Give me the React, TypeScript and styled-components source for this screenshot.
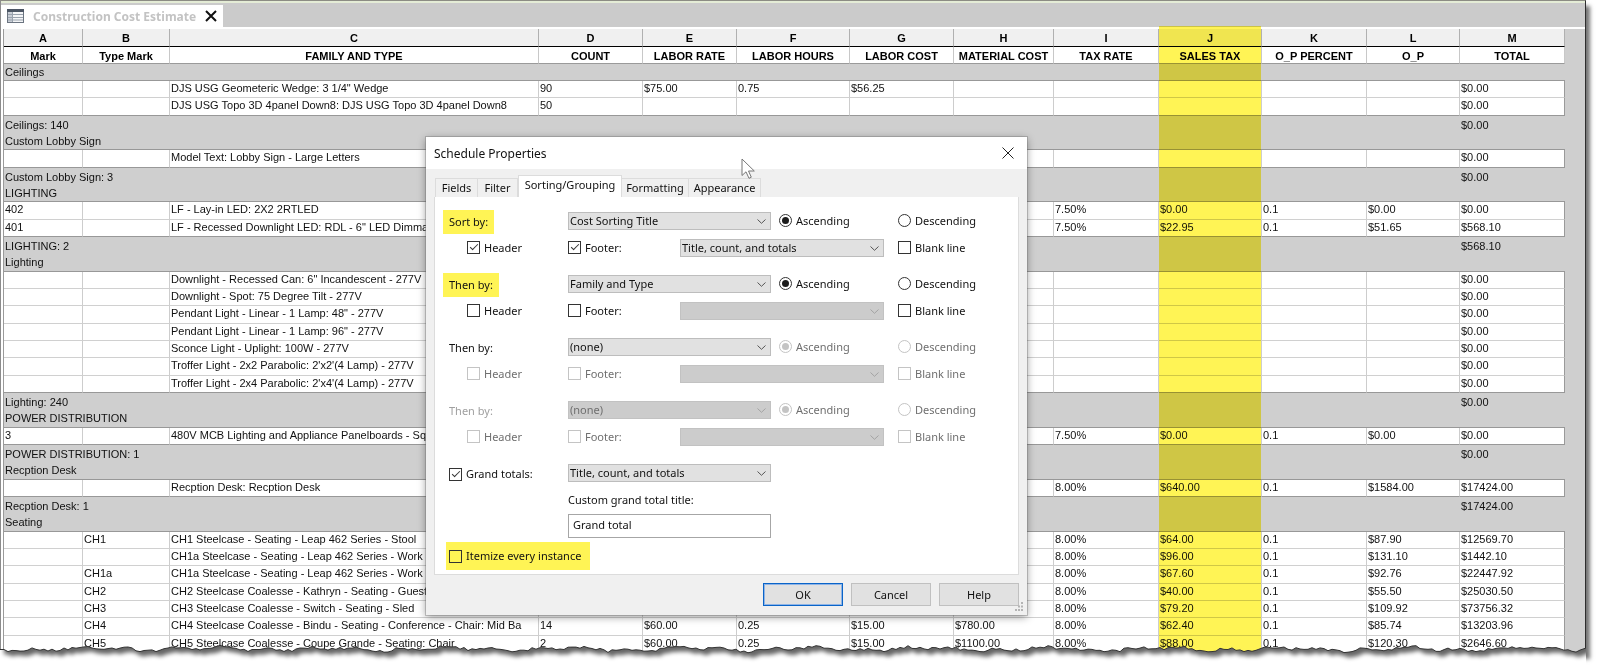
import React, { useId } from "react";
import styled, { createGlobalStyle, css } from "styled-components";

const GlobalStyle = createGlobalStyle`
  *, *::before, *::after { box-sizing: border-box; }
  body { margin: 0; background: #fff; }
`;

const uiFont = '"Noto Sans", "Open Sans", sans-serif';
const gridFont = '"Liberation Sans", Arial, sans-serif';

/* ---------- frame ---------- */

const Frame = styled.main`
  position: relative;
  margin-right: 14px;
  border-top: 1px solid #8c8c84;
  border-left: 1px solid #8c8c8c;
  border-right: 1px solid #2e2e2e;
  background: #fff;
  box-shadow: 4px 6px 4px rgba(0, 0, 0, 0.55);
`;

const TabStrip = styled.div`
  display: flex;
  align-items: flex-end;
  height: 26px;
  border-top: 2px solid #e4ecd6;
  background: #cbcbcb;
`;

const DocumentTab = styled.div`
  display: flex;
  align-items: center;
  gap: 9px;
  height: 22px;
  padding: 0 6px;
  background: #fff;
  font: bold 12px/20px ${uiFont};
  color: #c3c3c3;
`;

const TabTitle = styled.span`
  padding-top: 2px;
`;

const IconButton = styled.button`
  display: flex;
  padding: 0;
  border: 0;
  background: none;
`;

/* ---------- schedule grid ---------- */

const GridArea = styled.div`
  margin-top: 2px;
  padding-right: 21px;
  margin-left: 2px;
  background: #cfcfcf;
`;

const Grid = styled.table`
  width: 100%;
  table-layout: fixed;
  border-collapse: separate;
  border-spacing: 0;
  border-left: 1px solid #9a9a9a;
  font: 11px/14px ${gridFont};
  color: #111;

  tbody tr {
    height: 17px;
  }
  tbody tr:nth-child(3n) {
    height: 18px;
  }
`;

const LetterCell = styled.th<{ $marked?: boolean }>`
  position: relative;
  height: 18px;
  padding: 0;
  background: #f0f0f0;
  border-right: 1px solid #b0b0b0;
  border-bottom: 1px solid #000;
  color: #000;

  ${(p) =>
    p.$marked &&
    css`
      &::after {
        content: "";
        position: absolute;
        z-index: 1;
        top: -3px;
        left: 0;
        right: 0;
        height: 628px;
        background: #fff455;
        mix-blend-mode: multiply;
        pointer-events: none;
      }
    `}
`;

const TitleCell = styled.th`
  height: 17px;
  padding: 2px 0 0;
  background: #fff;
  border-right: 1px solid #c8c8c8;
  border-bottom: 1px solid #9a9a9a;
  color: #000;
  white-space: nowrap;
`;

const DataCell = styled.td<{ $last: boolean }>`
  padding: 0 0 0 1px;
  vertical-align: top;
  overflow: hidden;
  white-space: nowrap;
  background: #fff;
  border-right: 1px solid #cdcdcd;
  border-bottom: 1px solid ${(p) => (p.$last ? "#989898" : "#d0d0d0")};

  &:last-child {
    border-right-color: #9a9a9a;
  }
`;

const BandCell = styled.td<{ $edge?: boolean }>`
  padding: ${(p) => (p.$edge ? 1 : 2)}px 0 0 1px;
  vertical-align: top;
  background: #cfcfcf;
  border-bottom: ${(p) => (p.$edge ? "1px solid #989898" : "0")};
`;

/* ---------- dialog ---------- */

const Dialog = styled.section`
  position: absolute;
  z-index: 3;
  top: 136px;
  left: 425px;
  width: 601px;
  background: #f0f0f0;
  box-shadow: 0 0 0 1px rgba(110, 110, 110, 0.35), 0 2px 8px rgba(0, 0, 0, 0.4);
  font: 11px/16px ${uiFont};
  color: #111;
`;

const TitleBar = styled.header`
  display: flex;
  align-items: center;
  justify-content: space-between;
  height: 32px;
  padding: 0 13px 0 8px;
  background: #fff;
`;

const DialogTitle = styled.h1`
  margin: 0;
  padding-top: 2px;
  font: 12px/16px ${uiFont};
`;

const TabRow = styled.div`
  display: flex;
  align-items: flex-end;
  height: 28px;
  padding-left: 9px;
`;

const Tab = styled.button<{ $active?: boolean; $width: number }>`
  width: ${(p) => p.$width}px;
  height: ${(p) => (p.$active ? 22 : 19)}px;
  padding: 0 0 ${(p) => (p.$active ? 4 : 0)}px;
  border: 1px solid #dcdcdc;
  border-bottom: 0;
  border-left-width: ${(p) => (p.$active ? 1 : 0)}px;
  background: ${(p) => (p.$active ? "#fff" : "#f0f0f0")};
  font: inherit;
  color: inherit;
  white-space: nowrap;

  &:first-child {
    border-left-width: 1px;
  }
`;

const Panel = styled.form`
  display: flex;
  flex-direction: column;
  margin: 0 8px;
  padding: 13px 0 4px 14px;
  border: 1px solid #dcdcdc;
  border-top: 0;
  background: #fff;
`;

const Level = styled.fieldset`
  display: grid;
  grid-template-columns: 119px 112px 91px 113px 1fr;
  grid-auto-rows: 24px;
  row-gap: 3px;
  align-items: center;
  margin: 0 0 12px;
  padding: 0;
  border: 0;
  min-width: 0;
`;

const LevelName = styled.span<{ $marked?: boolean; $dim?: boolean }>`
  justify-self: start;
  margin-left: -6px;
  padding: 4px 6px;
  background: ${(p) => (p.$marked ? "#fff455" : "none")};
  color: ${(p) => (p.$dim ? "#a0a0a0" : "inherit")};
`;

const Slot = styled.div<{ $span?: number; $inset?: number }>`
  grid-column: span ${(p) => p.$span ?? 1};
  padding-left: ${(p) => p.$inset ?? 0}px;
`;

const OptionLabel = styled.label<{ $dim?: boolean; $marked?: boolean }>`
  display: inline-flex;
  align-items: center;
  gap: 4px;
  white-space: nowrap;
  color: ${(p) => (p.$dim ? "#6f6f6f" : "inherit")};

  ${(p) =>
    p.$marked &&
    css`
      align-self: flex-start;
      height: 28px;
      margin: 4px 0 0 -3px;
      padding: 0 9px 0 3px;
      background: #fff455;
    `}
`;

const Box = styled.input`
  appearance: none;
  position: relative;
  flex: none;
  width: 13px;
  height: 13px;
  margin: 0;
  border: 1px solid #333;
  background: transparent;

  &:disabled {
    border-color: #c4c4c4;
  }
  &[type="radio"] {
    border-radius: 50%;
  }
  &[type="checkbox"]:checked::after {
    content: "";
    position: absolute;
    top: 0;
    left: 4px;
    width: 4px;
    height: 8px;
    border: solid #333;
    border-width: 0 1px 1px 0;
    transform: rotate(45deg);
  }
  &[type="radio"]:checked::after {
    content: "";
    position: absolute;
    inset: 2px;
    border-radius: 50%;
    background: #1c1c1c;
  }
  &[type="radio"]:checked:disabled::after {
    background: #c4c4c4;
  }
`;

const SelectShell = styled.span`
  position: relative;
  display: block;
  margin-bottom: 2px;

  svg {
    position: absolute;
    top: 7px;
    right: 5px;
    pointer-events: none;
  }
`;

const SelectBox = styled.select`
  appearance: none;
  display: block;
  width: 100%;
  height: 18px;
  padding: 0 1px;
  border: 1px solid #bdbdbd;
  border-radius: 0;
  background: #e1e1e1;
  font: 11px/16px ${uiFont};
  color: #111;
  opacity: 1;

  &:disabled {
    border-color: #c2c2c2;
    background: #ccc;
    color: #6f6f6f;
  }
`;

const TotalsRow = styled.div`
  display: grid;
  grid-template-columns: 119px 203px;
  align-items: center;
  height: 24px;
`;

const TitleField = styled.div`
  display: flex;
  flex-direction: column;
  gap: 6px;
  width: 203px;
  margin: 6px 0 0 119px;
`;

const TextInput = styled.input`
  width: 100%;
  height: 24px;
  padding: 0 4px 4px;
  border: 1px solid #a6a6a6;
  font: 11px/16px ${uiFont};
  color: #111;
`;

const Footer = styled.footer`
  display: flex;
  justify-content: flex-end;
  gap: 8px;
  padding: 8px 8px 9px;
`;

const PushButton = styled.button<{ $primary?: boolean }>`
  width: 80px;
  height: 23px;
  padding: 0;
  border: 1px solid ${(p) => (p.$primary ? "#0a64c8" : "#c0c0c0")};
  box-shadow: ${(p) => (p.$primary ? "inset 0 0 0 1px #8fb4e6" : "none")};
  background: #e1e1e1;
  font: inherit;
  color: #111;
`;

const Grip = styled.svg`
  position: absolute;
  right: 3px;
  bottom: 3px;
`;

const Cursor = styled.svg`
  position: absolute;
  z-index: 4;
  top: 157px;
  left: 740px;
`;

const TornEdge = styled.svg`
  position: relative;
  z-index: 2;
  display: block;
  width: 100%;
  height: 34px;
  margin-top: -20px;
`;

/* ---------- data ---------- */

const columns: [string, string, number][] = [
  ["A", "Mark", 79],
  ["B", "Type Mark", 87],
  ["C", "FAMILY AND TYPE", 369],
  ["D", "COUNT", 104],
  ["E", "LABOR RATE", 94],
  ["F", "LABOR HOURS", 113],
  ["G", "LABOR COST", 104],
  ["H", "MATERIAL COST", 100],
  ["I", "TAX RATE", 105],
  ["J", "SALES TAX", 103],
  ["K", "O_P PERCENT", 105],
  ["L", "O_P", 93],
  ["M", "TOTAL", 105],
];

type Group = { head: string; rows: string[][]; foot?: string; sum?: string };

const priced = (
  mark: string,
  type: string,
  name: string,
  tax: string,
  sales: string,
  op: string,
  total: string,
  work: string[] = ["", "", "", "", ""]
) => [mark, type, name, ...work, tax, sales, "0.1", op, total];

const plain = (name: string, work: string[] = ["", "", "", ""]) => [
  "", "", name, ...work, "", "", "", "", "", "$0.00",
];

const groups: Group[] = [
  {
    head: "Ceilings",
    rows: [
      plain('DJS USG Geometeric Wedge: 3 1/4" Wedge', ["90", "$75.00", "0.75", "$56.25"]),
      plain("DJS USG Topo 3D 4panel Down8: DJS USG Topo 3D 4panel Down8", ["50", "", "", ""]),
    ],
    foot: "Ceilings: 140",
    sum: "$0.00",
  },
  {
    head: "Custom Lobby Sign",
    rows: [plain("Model Text: Lobby Sign - Large Letters")],
    foot: "Custom Lobby Sign: 3",
    sum: "$0.00",
  },
  {
    head: "LIGHTING",
    rows: [
      priced("402", "", "LF - Lay-in LED: 2X2 2RTLED", "7.50%", "$0.00", "$0.00", "$0.00"),
      priced("401", "", 'LF - Recessed Downlight LED: RDL - 6" LED Dimmable', "7.50%", "$22.95", "$51.65", "$568.10"),
    ],
    foot: "LIGHTING: 2",
    sum: "$568.10",
  },
  {
    head: "Lighting",
    rows: [
      plain('Downlight - Recessed Can: 6" Incandescent - 277V'),
      plain("Downlight - Spot: 75 Degree Tilt - 277V"),
      plain('Pendant Light - Linear - 1 Lamp: 48" - 277V'),
      plain('Pendant Light - Linear - 1 Lamp: 96" - 277V'),
      plain("Sconce Light - Uplight: 100W - 277V"),
      plain("Troffer Light - 2x2 Parabolic: 2'x2'(4 Lamp) - 277V"),
      plain("Troffer Light - 2x4 Parabolic: 2'x4'(4 Lamp) - 277V"),
    ],
    foot: "Lighting: 240",
    sum: "$0.00",
  },
  {
    head: "POWER DISTRIBUTION",
    rows: [
      priced("3", "", "480V MCB Lighting and Appliance Panelboards - Square D", "7.50%", "$0.00", "$0.00", "$0.00"),
    ],
    foot: "POWER DISTRIBUTION: 1",
    sum: "$0.00",
  },
  {
    head: "Recption Desk",
    rows: [
      priced("", "", "Recption Desk: Recption Desk", "8.00%", "$640.00", "$1584.00", "$17424.00"),
    ],
    foot: "Recption Desk: 1",
    sum: "$17424.00",
  },
  {
    head: "Seating",
    rows: [
      priced("", "CH1", "CH1 Steelcase - Seating - Leap 462 Series - Stool", "8.00%", "$64.00", "$87.90", "$12569.70"),
      priced("", "", "CH1a Steelcase - Seating - Leap 462 Series - Work", "8.00%", "$96.00", "$131.10", "$1442.10"),
      priced("", "CH1a", "CH1a Steelcase - Seating - Leap 462 Series - Work", "8.00%", "$67.60", "$92.76", "$22447.92"),
      priced("", "CH2", "CH2 Steelcase Coalesse - Kathryn - Seating - Guest", "8.00%", "$40.00", "$55.50", "$25030.50"),
      priced("", "CH3", "CH3 Steelcase Coalesse - Switch - Seating - Sled", "8.00%", "$79.20", "$109.92", "$73756.32"),
      priced("", "CH4", "CH4 Steelcase Coalesse - Bindu - Seating - Conference - Chair: Mid Ba", "8.00%", "$62.40", "$85.74", "$13203.96", ["14", "$60.00", "0.25", "$15.00", "$780.00"]),
      priced("", "CH5", "CH5 Steelcase Coalesse - Coupe Grande - Seating: Chair", "8.00%", "$88.00", "$120.30", "$2646.60", ["2", "$60.00", "0.25", "$15.00", "$1100.00"]),
    ],
  },
];

/* Ragged line across the sheet, in a 1600 x 34 box */
const ragged = (() => {
  const points: string[] = [];
  let seed = 11;
  for (let x = 0; x < 1584; x += 4) {
    seed = (seed * 1103515245 + 12345) % 2147483648;
    const noise = (seed / 2147483648 - 0.5) * 3;
    const wave = Math.sin(x / 19) * 1.3 + Math.sin(x / 7.3) * 1.2;
    points.push(`${x} ${(16 + wave + noise).toFixed(1)}`);
  }
  points.push("1586 15");
  return points.join(" L");
})();

/* ---------- pieces ---------- */

function Select({ value, label, disabled }: { value: string; label: string; disabled?: boolean }) {
  return (
    <SelectShell>
      <SelectBox aria-label={label} disabled={disabled} defaultValue={value}>
        <option value={value}>{value}</option>
      </SelectBox>
      <svg width="9" height="5" viewBox="0 0 9 5" fill="none" stroke={disabled ? "#a3a3a3" : "#555"}>
        <path d="M0.5 0.5 4.5 4.3 8.5 0.5" />
      </svg>
    </SelectShell>
  );
}

type OptionProps = { text: string; checked?: boolean; dim?: boolean; marked?: boolean; radio?: string };

function Option({ text, checked, dim, marked, radio }: OptionProps) {
  return (
    <OptionLabel $dim={dim} $marked={marked}>
      <Box type={radio ? "radio" : "checkbox"} name={radio} defaultChecked={checked} disabled={dim} />
      {text}
    </OptionLabel>
  );
}

type LevelProps = {
  name: string;
  field: string;
  marked?: boolean;
  ticked?: boolean;
  footer?: string;
  state?: "live" | "unset" | "off";
};

function SortLevel({ name, field, marked, ticked, footer = "", state = "live" }: LevelProps) {
  const id = useId();
  const dim = state !== "live";
  return (
    <Level>
      <LevelName $marked={marked} $dim={state === "off"}>{name}</LevelName>
      <Slot $span={2}><Select label={name} value={field} disabled={state === "off"} /></Slot>
      <Slot $inset={8}><Option radio={id} text="Ascending" checked dim={dim} /></Slot>
      <Slot $inset={14}><Option radio={id} text="Descending" dim={dim} /></Slot>
      <Slot $inset={18}><Option text="Header" checked={ticked} dim={dim} /></Slot>
      <Slot><Option text="Footer:" checked={ticked} dim={dim} /></Slot>
      <Slot $span={2}><Select label="Footer content" value={footer} disabled={!footer} /></Slot>
      <Slot $inset={14}><Option text="Blank line" dim={dim} /></Slot>
    </Level>
  );
}

function Schedule() {
  return (
    <GridArea>
      <Grid>
        <colgroup>
          {columns.map(([letter, , width]) => (
            <col key={letter} width={width} />
          ))}
        </colgroup>
        <thead>
          <tr>
            {columns.map(([letter]) => (
              <LetterCell key={letter} $marked={letter === "J"}>{letter}</LetterCell>
            ))}
          </tr>
          <tr>
            {columns.map(([letter, title]) => (
              <TitleCell key={letter}>{title}</TitleCell>
            ))}
          </tr>
        </thead>
        <tbody>
          {groups.map((g) => (
            <React.Fragment key={g.head}>
              <tr>
                <BandCell colSpan={13} $edge>{g.head}</BandCell>
              </tr>
              {g.rows.map((row, i) => (
                <tr key={i}>
                  {row.map((value, c) => (
                    <DataCell key={c} $last={i === g.rows.length - 1}>{value}</DataCell>
                  ))}
                </tr>
              ))}
              {g.foot && (
                <tr>
                  <BandCell colSpan={12}>{g.foot}</BandCell>
                  <BandCell>{g.sum}</BandCell>
                </tr>
              )}
            </React.Fragment>
          ))}
        </tbody>
      </Grid>
    </GridArea>
  );
}

function PropertiesDialog() {
  return (
    <Dialog role="dialog" aria-labelledby="dialog-title">
      <TitleBar>
        <DialogTitle id="dialog-title">Schedule Properties</DialogTitle>
        <IconButton aria-label="Close">
          <svg width="12" height="12" viewBox="0 0 12 12" stroke="#222" fill="none">
            <path d="M0.5 0.5 11.5 11.5M11.5 0.5 0.5 11.5" />
          </svg>
        </IconButton>
      </TitleBar>
      <TabRow role="tablist">
        <Tab role="tab" $width={43}>Fields</Tab>
        <Tab role="tab" $width={40}>Filter</Tab>
        <Tab role="tab" $width={104} $active aria-selected>Sorting/Grouping</Tab>
        <Tab role="tab" $width={67}>Formatting</Tab>
        <Tab role="tab" $width={72}>Appearance</Tab>
      </TabRow>
      <Panel>
        <SortLevel name="Sort by:" field="Cost Sorting Title" marked ticked footer="Title, count, and totals" />
        <SortLevel name="Then by:" field="Family and Type" marked />
        <SortLevel name="Then by:" field="(none)" state="unset" />
        <SortLevel name="Then by:" field="(none)" state="off" />
        <TotalsRow>
          <Option text="Grand totals:" checked />
          <Select label="Grand totals content" value="Title, count, and totals" />
        </TotalsRow>
        <TitleField>
          <label htmlFor="grand-title">Custom grand total title:</label>
          <TextInput id="grand-title" defaultValue="Grand total" />
        </TitleField>
        <Option text="Itemize every instance" marked />
      </Panel>
      <Footer>
        <PushButton $primary>OK</PushButton>
        <PushButton>Cancel</PushButton>
        <PushButton>Help</PushButton>
      </Footer>
      <Grip width="10" height="10" viewBox="0 0 10 10" fill="#b4b4b4" aria-hidden>
        <path d="M7 0h2v2h-2zM4 3.500h2v2h-2zM7 3.500h2v2h-2zM1 7h2v2h-2zM4 7h2v2h-2zM7 7h2v2h-2z" />
      </Grip>
    </Dialog>
  );
}

export default function App() {
  return (
    <>
      <GlobalStyle />
      <Frame>
        <TabStrip>
          <DocumentTab>
            <svg width="17" height="14" viewBox="0 0 17 14" aria-hidden>
              <rect x="0.5" y="0.5" width="16" height="13" fill="#f4f5f7" stroke="#6b7480" />
              <rect x="0" y="0" width="17" height="3" fill="#4c5664" />
              <rect x="1" y="3" width="4" height="10" fill="#c9ced6" />
              <path d="M1 5.500H16M1 8.500H16M1 11H16M5.500 3V13" stroke="#9aa3ae" />
            </svg>
            <TabTitle>Construction Cost Estimate</TabTitle>
            <IconButton aria-label="Close tab">
              <svg width="12" height="12" viewBox="0 0 12 12" stroke="#111" strokeWidth="2" fill="none">
                <path d="M1 1 11 11M11 1 1 11" />
              </svg>
            </IconButton>
          </DocumentTab>
        </TabStrip>
        <Schedule />
        <PropertiesDialog />
        <Cursor width="15" height="21" viewBox="0 0 15 21" aria-hidden>
          <path d="M1 1V17.500L5 13.800 8 20.300 10.300 19.200 7.500 13H13.300Z" fill="#fff" stroke="#777" />
        </Cursor>
      </Frame>
      <TornEdge viewBox="0 0 1600 34" preserveAspectRatio="none" aria-hidden>
        <defs>
          <clipPath id="below">
            <path d={`M${ragged} V34 H0 Z`} />
          </clipPath>
          <filter id="soft" x="-2%" y="-50%" width="104%" height="200%">
            <feGaussianBlur stdDeviation="2" />
          </filter>
        </defs>
        <g clipPath="url(#below)">
          <rect width="1600" height="34" fill="#fff" />
          <path d={`M${ragged} V0 H0 Z`} transform="translate(4 5)" fill="#000" fillOpacity="0.6" filter="url(#soft)" />
        </g>
        <path d={`M${ragged}`} fill="none" stroke="#333" strokeWidth="1" />
      </TornEdge>
    </>
  );
}
